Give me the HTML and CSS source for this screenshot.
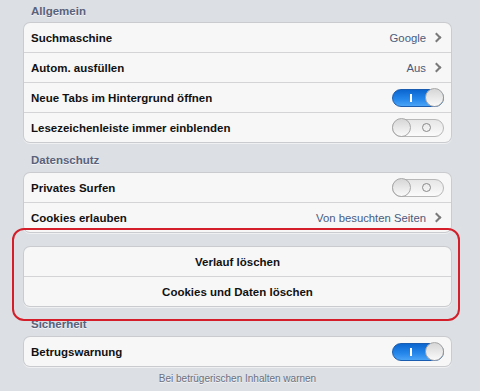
FILE: index.html
```html
<!DOCTYPE html>
<html lang="de">
<head>
<meta charset="utf-8">
<link rel="stylesheet" href="styles.css">
</head>
<body>
<div class="page">
  <div class="header first">Allgemein</div>
  <div class="group">
    <div class="row"><span class="label">Suchmaschine</span><span class="value">Google</span><span class="chev"></span></div>
    <div class="row"><span class="label">Autom. ausfüllen</span><span class="value">Aus</span><span class="chev"></span></div>
    <div class="row"><span class="label">Neue Tabs im Hintergrund öffnen</span><span class="switch on"><span class="mark-i"></span><span class="knob"></span></span></div>
    <div class="row"><span class="label">Lesezeichenleiste immer einblenden</span><span class="switch off"><span class="knob"></span><span class="mark-o"></span></span></div>
  </div>

  <div class="header">Datenschutz</div>
  <div class="group">
    <div class="row"><span class="label">Privates Surfen</span><span class="switch off"><span class="knob"></span><span class="mark-o"></span></span></div>
    <div class="row"><span class="label">Cookies erlauben</span><span class="value">Von besuchten Seiten</span><span class="chev"></span></div>
  </div>

  <div class="group buttons">
    <div class="row center"><span class="label">Verlauf löschen</span></div>
    <div class="row center"><span class="label">Cookies und Daten löschen</span></div>
  </div>

  <div class="header">Sicherheit</div>
  <div class="group">
    <div class="row"><span class="label">Betrugswarnung</span><span class="switch on"><span class="mark-i"></span><span class="knob"></span></span></div>
  </div>
  <div class="footer">Bei betrügerischen Inhalten warnen</div>

  <div class="highlight"></div>
</div>
</body>
</html>
```

FILE: styles.css
```css
html, body {
  margin: 0;
  padding: 0;
}
body {
  width: 480px;
  height: 391px;
  overflow: hidden;
  background: #dcdfe4;
  font-family: "Liberation Sans", Arial, sans-serif;
}
.page {
  position: relative;
  display: flex;
  flex-direction: column;
  padding: 0 29px 0 24px;
  height: 391px;
  box-sizing: border-box;
}
.header {
  font-size: 11.5px;
  font-weight: bold;
  color: #59627a;
  line-height: 16px;
  padding: 10px 0 5px 7px;
  text-shadow: 0 1px 0 #f2f3f5;
}
.header.first {
  padding-top: 3px;
  padding-bottom: 4px;
}
.group {
  background: #f7f7f7;
  border-radius: 6px;
  box-shadow: 0 0 0 1px #c9cbcf, 0 1px 0 1px #eef0f2;
  display: flex;
  flex-direction: column;
}
.group.buttons {
  margin-top: 15px;
}
.row {
  height: 29px;
  display: flex;
  align-items: center;
  padding: 0 7px 0 7px;
  box-sizing: border-box;
}
.row + .row {
  border-top: 1px solid #d4d4d6;
  height: 30px;
}
.row.center {
  justify-content: center;
}
.label {
  font-size: 11.5px;
  font-weight: bold;
  color: #111;
  flex: 1;
}
.row.center .label {
  flex: none;
}
.value {
  font-size: 11.3px;
  color: #4b5b7c;
  margin-right: 7px;
}
.chev {
  width: 5px;
  height: 5px;
  border-right: 2px solid #7a7a7a;
  border-top: 2px solid #7a7a7a;
  transform: rotate(45deg);
  margin-right: 4px;
}
.switch {
  position: relative;
  width: 52px;
  height: 18px;
  border-radius: 10px;
  box-sizing: border-box;
  display: flex;
  align-items: center;
}
.switch.on {
  background: linear-gradient(#0b66cf, #2788ec 60%, #4aa3f5);
  border: 1px solid #1a5db0;
  justify-content: flex-end;
}
.switch.off {
  background: linear-gradient(#e6e6e6, #fbfbfb);
  border: 1px solid #b8b8b8;
}
.knob {
  width: 19px;
  height: 19px;
  margin: -1px;
  border-radius: 50%;
  background: linear-gradient(#d6d6d6, #fafafa);
  border: 1px solid #a8a8a8;
  box-sizing: border-box;
  flex: none;
}
.mark-i {
  position: absolute;
  left: 17px;
  top: 4px;
  width: 1.5px;
  height: 8px;
  background: #fff;
}
.mark-o {
  position: absolute;
  left: 29px;
  top: 3px;
  width: 9px;
  height: 9px;
  border: 1.5px solid #8a8a8a;
  border-radius: 50%;
  box-sizing: border-box;
}
.footer {
  text-align: center;
  font-size: 10px;
  color: #6a7080;
  margin-top: 7px;
  text-shadow: 0 1px 0 #f2f3f5;
}
.highlight {
  position: absolute;
  left: 12px;
  top: 228px;
  width: 448px;
  height: 93px;
  border: 2px solid #d41f2a;
  border-radius: 12px;
  box-sizing: border-box;
  pointer-events: none;
}
```
